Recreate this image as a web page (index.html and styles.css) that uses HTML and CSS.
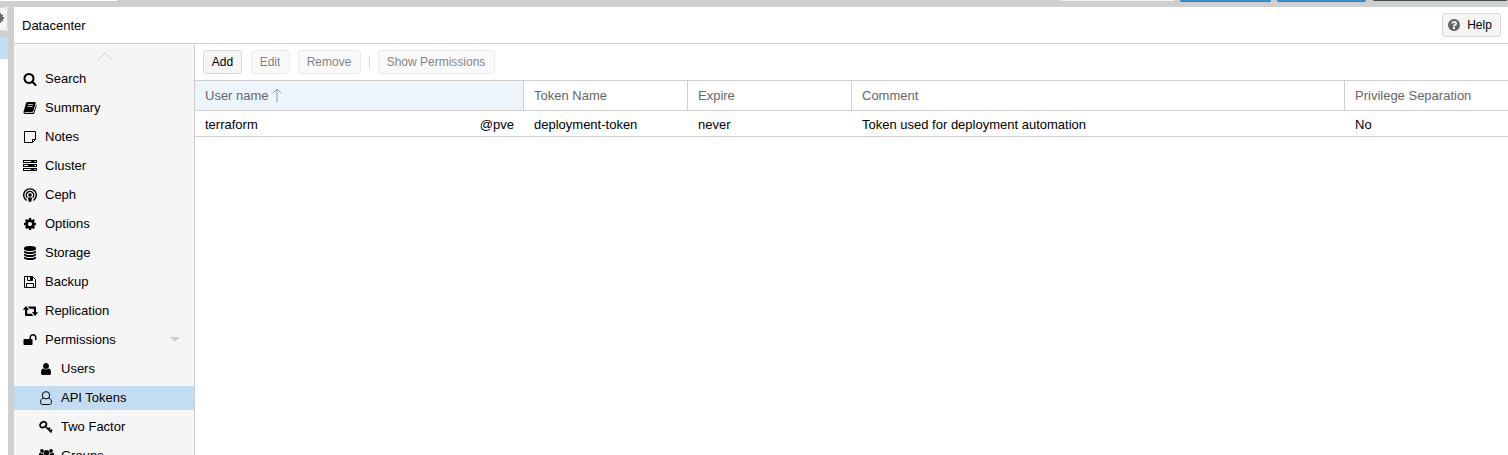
FILE: index.html
```html
<!DOCTYPE html>
<html lang="en">
<head>
<meta charset="utf-8">
<title>Datacenter</title>
<link rel="stylesheet" href="styles.css">
</head>
<body>
<div class="topbar">
  <span class="top-field"></span>
  <span class="top-btn doc"></span><span class="top-btn vm"></span><span class="top-btn ct"></span><span class="top-btn account"></span>
</div>
<div class="workspace">
  <aside class="tree">
    <div class="tree-tool"><svg class="tree-gear" viewBox="0 0 4 12"><path d="M0 1h1v2l1.500-.5.8 1.200-1.100 1.300H4v2H2.200l1.100 1.300-.8 1.200L1 9v2H0z"/></svg></div>
    <div class="tree-selected"></div>
  </aside>
  <main class="panel">
    <header class="panel-header">
      <span>Datacenter</span>
      <button class="btn help"><svg class="help-icon" viewBox="0 0 1792 1792"><path d="M1024 1376v-192q0-14-9-23t-23-9h-192q-14 0-23 9t-9 23v192q0 14 9 23t23 9h192q14 0 23-9t9-23zm256-672q0-88-55.500-163t-138.500-116-170-41q-243 0-371 213-15 24 8 42l132 100q7 6 19 6 16 0 25-12 53-68 86-92 34-24 86-24 48 0 85.500 26t37.500 59q0 38-20 61t-68 45q-63 28-115.500 86.500t-52.500 125.500v36q0 14 9 23t23 9h192q14 0 23-9t9-23q0-19 21.500-49.500t54.500-49.500q32-18 49-28.500t46-35 44.500-48 28-60.500 12.500-81zm384 192q0 209-103 385.500t-279.500 279.500-385.500 103-385.500-103-279.500-279.500-103-385.500 103-385.500 279.500-279.500 385.500-103 385.500 103 279.500 279.500 103 385.500z"/></svg>Help</button>
    </header>
    <div class="panel-body">
      <nav class="nav">
        <div class="scroll-up"><svg viewBox="0 0 16 9"><path d="M.7 8.300 8 1l7.300 7.300"/></svg></div>
        <a class="item"><svg class="icon" viewBox="0 0 1792 1792"><path d="M1216 832q0-185-131.500-316.500t-316.500-131.500-316.500 131.500-131.500 316.500 131.500 316.500 316.500 131.500 316.500-131.500 131.500-316.500zm512 832q0 52-38 90t-90 38q-54 0-90-38l-343-342q-179 124-399 124-143 0-273.500-55.500t-225-150-150-225-55.500-273.500 55.500-273.500 150-225 225-150 273.500-55.500 273.500 55.500 225 150 150 225 55.500 273.500q0 220-124 399l343 343q37 37 37 90z"/></svg>Search</a>
        <a class="item"><svg class="icon" viewBox="0 0 14 14"><path fill-rule="evenodd" d="M4.500 1h7.200c.8 0 1.200.6 1 1.300l-2.200 7.500c-.2.700-.7 1.100-1.400 1.100H2c-.6 0-.7.900.3.900h7.500c.5 0 .8-.2 1-.7l2.300-7.600c.5.300.6.800.4 1.400l-2.100 7c-.2.700-.8 1.100-1.600 1.100H2.300C1 13 .2 11.800.6 10.500L3 2.200C3.300 1.500 3.800 1 4.500 1zM5.200 3.200l-.3.900h5l.3-.9zM4.600 5.200l-.3.900h5l.3-.9z"/></svg>Summary</a>
        <a class="item"><svg class="icon" viewBox="0 0 14 14"><path class="line" d="M1.500 1.500h11v8l-3 3h-8zM12.500 9.500h-3v3"/></svg>Notes</a>
        <a class="item"><svg class="icon" viewBox="0 0 14 14"><path fill-rule="evenodd" d="M0 1h14v3H0zM1 2v1h7V2zM11.500 2v1H13V2zM0 5h14v3H0zM1 6v1h4V6zM11.500 6v1H13V6zM0 9h14v3H0zM1 10v1h7v-1zM11.500 10v1H13v-1z"/></svg>Cluster</a>
        <a class="item"><svg class="icon" viewBox="0 0 14 14"><path class="line ring" d="M3.700 12.500A6.300 6.300 0 1 1 10.300 12.500M4.300 9.700A3.700 3.700 0 1 1 9.700 9.700"/><circle cx="7" cy="7" r="1.800"/><path d="M5 9.500h4l-.7 4.200H5.700z"/></svg>Ceph</a>
        <a class="item"><svg class="icon" viewBox="0 0 1792 1792"><path d="M1152 896q0-106-75-181t-181-75-181 75-75 181 75 181 181 75 181-75 75-181zm512-109v222q0 12-8 23t-20 13l-185 28q-19 54-39 91 35 50 107 138 10 12 10 25t-9 23q-27 37-99 108t-94 71q-12 0-26-9l-138-108q-44 23-91 38-16 136-29 186-7 28-36 28h-222q-14 0-24.500-8.500t-11.500-21.500l-28-184q-49-16-90-37l-141 107q-10 9-25 9-14 0-25-11-126-114-165-168-7-10-7-23 0-12 8-23 15-21 51-66.500t54-70.500q-27-50-41-99l-183-27q-13-2-21-12.500t-8-23.500v-222q0-12 8-23t19-13l186-28q14-46 39-92-40-57-107-138-10-12-10-24 0-10 9-23 26-36 98.500-107.500t94.500-71.500q13 0 26 10l138 107q44-23 91-38 16-136 29-186 7-28 36-28h222q14 0 24.500 8.500t11.500 21.500l28 184q49 16 90 37l142-107q9-9 24-9 13 0 25 10 129 119 165 170 7 8 7 22 0 12-8 23-15 21-51 66.500t-54 70.500q26 50 41 98l183 28q13 2 21 12.500t8 23.500z"/></svg>Options</a>
        <a class="item"><svg class="icon" viewBox="0 0 1792 1792"><path d="M896 768q237 0 443-43t325-127v170q0 69-103 128t-280 93.500-385 34.500-385-34.500-280-93.500-103-128v-170q119 84 325 127t443 43zm0 768q237 0 443-43t325-127v170q0 69-103 128t-280 93.500-385 34.500-385-34.500-280-93.500-103-128v-170q119 84 325 127t443 43zm0-384q237 0 443-43t325-127v170q0 69-103 128t-280 93.500-385 34.500-385-34.500-280-93.500-103-128v-170q119 84 325 127t443 43zm0-1152q208 0 385 34.500t280 93.500 103 128v128q0 69-103 128t-280 93.500-385 34.500-385-34.500-280-93.500-103-128v-128q0-69 103-128t280-93.500 385-34.500z"/></svg>Storage</a>
        <a class="item"><svg class="icon" viewBox="0 0 14 14"><path class="line" d="M1.500 1.500h8l3 3v8h-11zM4.500 1.500v4h5v-4M3.500 12.500v-4h7v4"/><path d="M7 2h2v3H7z"/></svg>Backup</a>
        <a class="item"><svg class="icon wide" viewBox="0 0 15 14"><path d="M3 2 6.200 5.700H4.200V9.700h4.300L10.400 12H3c-.7 0-1-.3-1-1V5.700H-.2zM4.800 2.400H12c.7 0 1 .3 1 1v4.900h2.200L12 12 8.800 8.300h2V4.700H6.700z"/></svg>Replication</a>
        <a class="item"><svg class="icon" viewBox="0 0 1792 1792"><path d="M1728 576v256q0 26-19 45t-45 19h-64q-26 0-45-19t-19-45v-256q0-106-75-181t-181-75-181 75-75 181v192h96q40 0 68 28t28 68v576q0 40-28 68t-68 28h-960q-40 0-68-28t-28-68v-576q0-40 28-68t68-28h672v-192q0-185 131.500-316.500t316.500-131.500 316.500 131.500 131.500 316.500z"/></svg>Permissions<span class="expander"></span></a>
        <a class="item sub"><svg class="icon" viewBox="0 0 1792 1792"><path d="M1536 1399q0 109-62.500 187t-150.500 78h-854q-88 0-150.500-78t-62.500-187q0-85 8.500-160.500t31.500-152 58.500-131 94-89 134.500-34.500q131 128 313 128t313-128q76 0 134.500 34.500t94 89 58.500 131 31.500 152 8.500 160.500zm-256-887q0 159-112.500 271.500t-271.500 112.500-271.500-112.500-112.500-271.500 112.500-271.500 271.500-112.500 271.500 112.500 112.500 271.500z"/></svg>Users</a>
        <a class="item sub selected"><svg class="icon" viewBox="0 0 14 14"><path class="line" d="M4.300 7.100C2.200 7.600 1.500 9.200 1.500 11.400c0 1.400.9 2.100 2.100 2.100h6.800c1.200 0 2.100-.7 2.100-2.100 0-2.200-.7-3.800-2.800-4.300"/><circle class="line" cx="7" cy="4.300" r="3.700"/></svg>API Tokens</a>
        <a class="item sub"><svg class="icon" viewBox="0 0 14 14"><ellipse class="line key" cx="4.200" cy="4.600" rx="3.400" ry="2.600" transform="rotate(-35 4.200 4.600)"/><path class="line key" d="m6.500 6.500 6 6M9.300 9.300l1.900-1.700M11.300 11.300l1.700-1.600"/></svg>Two Factor</a>
        <a class="item sub"><svg class="icon wide" viewBox="0 0 15 14"><circle cx="3" cy="1.900" r="1.900"/><circle cx="12" cy="1.900" r="1.900"/><circle cx="7.500" cy="3.700" r="2.700"/><path d="M0 6.500V5C0 4.300.5 3.800 1.200 4.100c1 .5 2 .6 3 .2l.4 2.200zM15 6.500V5c0-.7-.5-1.200-1.200-.9-1 .5-2 .6-3 .2l-.4 2.200zM2.500 13V9.500C2.500 8 3.500 6.700 5 6.700q2.500 1.200 5 0c1.500 0 2.500 1.300 2.500 2.800V13z"/></svg>Groups</a>
      </nav>
      <section class="content">
        <div class="toolbar">
          <button class="btn add">Add</button>
          <button class="btn edit" disabled>Edit</button>
          <button class="btn remove" disabled>Remove</button>
          <span class="separator"></span>
          <button class="btn show" disabled>Show Permissions</button>
        </div>
        <div class="row head">
          <div class="cell sorted">User name<svg class="sort" viewBox="0 0 10 15"><path d="M5 14.500V1.200M.6 5.400 5 1l4.400 4.400"/></svg></div>
          <div class="cell">Token Name</div>
          <div class="cell">Expire</div>
          <div class="cell">Comment</div>
          <div class="cell">Privilege Separation</div>
        </div>
        <div class="row data">
          <div class="cell user"><span>terraform</span><span>@pve</span></div>
          <div class="cell">deployment-token</div>
          <div class="cell">never</div>
          <div class="cell">Token used for deployment automation</div>
          <div class="cell">No</div>
        </div>
      </section>
    </div>
  </main>
</div>
</body>
</html>
```
FILE: styles.css
```css
* { box-sizing: border-box; }
body {
  margin: 0;
  height: 455px;
  overflow: hidden;
  background: #cfcfcf;
  color: #000;
  font: 13px/17px "Liberation Sans", Arial, sans-serif;
}
svg { display: block; flex: none; }

.topbar { height: 7px; display: flex; align-items: flex-start; }
.top-field { width: 117px; height: 1px; background: #fff; margin-right: 944px; }
.top-btn { height: 2px; border-radius: 0 0 3px 3px; border-bottom: 1px solid #2b7fc0; background: #3892d4; }
.doc { width: 113px; height: 1px; margin-right: 6px; background: #f5f5f5; border: 0; }
.vm { width: 91px; margin-right: 6px; }
.ct { width: 89px; margin-right: 7px; }
.account { width: 134px; height: 1px; background: #464d4d; border: 0; }

.workspace { display: flex; height: 448px; }
.tree { width: 8px; margin-right: 6px; background: #fff; overflow: hidden; }
.tree-tool {
  height: 24px;
  background: #f5f5f5;
  border: 1px solid #d8d8d8;
  border-left: 0;
  border-radius: 0 3px 3px 0;
  padding-top: 5px;
}
.tree-gear { width: 4px; height: 12px; margin-top: -1px; fill: #666; }
.tree-selected { height: 28px; border-top: 6px solid #cfcfcf; background: #c2ddf2; }

.panel { flex: 1; min-width: 0; background: #fff; }
.panel-header {
  height: 37px;
  display: flex;
  align-items: center;
  justify-content: space-between;
  padding: 0 7px 0 8px;
  border-bottom: 1px solid #cfcfcf;
}
.btn {
  height: 24px;
  padding: 0;
  display: flex;
  align-items: center;
  justify-content: center;
  font: 12px/16px "Liberation Sans", Arial, sans-serif;
  color: #000;
  background: #f5f5f5;
  border: 1px solid #d8d8d8;
  border-radius: 3px;
}
.btn:disabled { opacity: .5; }
.help { width: 59px; gap: 6px; padding-right: 4px; }
.help-icon { width: 14px; height: 14px; fill: #666; }

.panel-body { display: flex; height: 411px; }
.nav { width: 181px; background: #f5f5f5; border-right: 1px solid #cfcfcf; overflow: hidden; }
.scroll-up { height: 23px; padding: 8px 0 0 83px; }
.scroll-up svg { width: 16px; height: 9px; fill: none; stroke: #cfcfcf; }
.item {
  height: 24px;
  margin-bottom: 5px;
  padding: 0 14px 2px 9px;
  display: flex;
  align-items: center;
  gap: 8px;
}
.sub { padding-left: 25px; }
.selected { background: #c2ddf2; }
.icon { width: 14px; height: 14px; margin-bottom: -2px; }
.icon.wide { width: 15px; margin-right: -1px; }
.line { fill: none; stroke: #000; stroke-width: 1; }
.ring { stroke-width: 1.4; }
.key { stroke-width: 1.7; }
.expander {
  margin-left: auto;
  border: 5px solid transparent;
  border-top-color: #cfcfcf;
  border-bottom: 0;
}

.content { flex: 1; min-width: 0; }
.toolbar {
  height: 37px;
  display: flex;
  align-items: center;
  padding-left: 8px;
  border-bottom: 1px solid #cfcfcf;
}
.add { width: 39px; margin-right: 9px; }
.edit { width: 39px; margin-right: 8px; padding-right: 1px; }
.remove { width: 63px; margin-right: 8px; padding-right: 1px; }
.separator { width: 1px; height: 14px; margin-right: 8px; background: #d8d8d8; }
.show { width: 117px; padding-right: 1px; }

.row {
  display: grid;
  grid-template-columns: 329px 164px 164px 493px 1fr;
  border-bottom: 1px solid #cfcfcf;
}
.cell { display: flex; align-items: center; padding: 0 10px; white-space: nowrap; }
.head { height: 30px; color: #666; }
.head .cell { border-right: 1px solid #cfcfcf; }
.head .cell:last-child { border-right: 0; }
.head .sorted { background: #edf5fc; }
.sort { width: 10px; height: 15px; margin-left: 3.5px; fill: none; stroke: #999; }
.data { height: 26px; padding-top: 2px; }
.user { justify-content: space-between; }
```
